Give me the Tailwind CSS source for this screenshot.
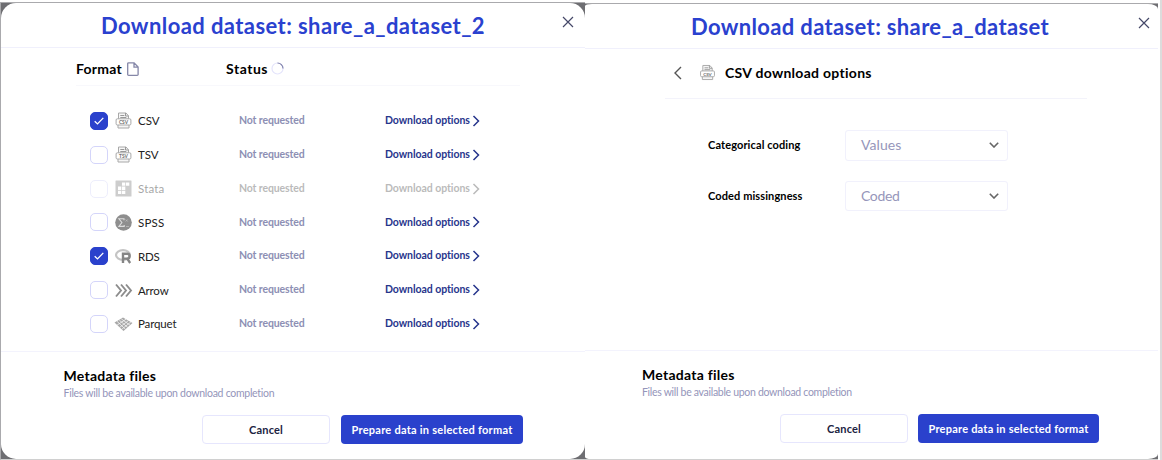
<!DOCTYPE html>
<html lang="en"><head><meta charset="utf-8"><title>Download dataset</title>
<script src="https://cdn.jsdelivr.net/npm/@tailwindcss/browser@4"></script></head>
<body class="bg-white font-['Lato',sans-serif] text-black">
<main class="flex h-[460px] w-[1162px] overflow-hidden">
<section class="mt-[2px] h-[458px] w-[585px] border-t border-l border-[#aaaaad] bg-[#6e6e72] border-b border-b-[#d0d0d0]">
<div class="flex h-[456px] flex-col rounded-[15px] bg-white">
<header class="flex h-[45px] border-b border-[#f0f0fc] pl-[100px]">
<h1 class="h-[45px] w-[457px] text-[22px] leading-[45px] font-bold whitespace-nowrap text-[#2a41cf]"><span data-w="384">Download dataset: share_a_dataset_2</span></h1>
<svg class="mt-[13px] ml-[4px] h-[12px] w-[12px]" viewBox="0 0 12 12" stroke="#454868" stroke-width="1.2"><path d="M1 1l10 10M11 1L1 11"/></svg>
</header>
<div class="ml-[75px] flex h-[38px] w-[444px] items-center border-b border-[#f8f8fc] pt-[4px] text-[14px] font-bold whitespace-nowrap">
<div class="flex w-[150px] items-center gap-[5px]"><span data-w="46">Format</span><svg class="h-[14px] w-[12px]" viewBox="0 0 12 14" fill="none" stroke="#8587a8" stroke-width="1.3"><path d="M1.6.8h5.5l4 4.2v7.400a.9.9 0 0 1-.9.900H1.600a.9.9 0 0 1-.9-.9V1.700a.9.9 0 0 1 .9-.9zM7 .8v4.300h4"/></svg></div>
<div class="flex items-center gap-[3px]"><span data-w="42">Status</span><svg class="h-[13px] w-[13px]" viewBox="0 0 13 13" fill="none" stroke-width="1.2"><circle cx="6.5" cy="6.5" r="5.5" stroke="#e4e4fb"/><path d="M6.5 1A5.5 5.5 0 0 1 12 6.5" stroke="#8284ad"/></svg></div>
</div>
<div id="rows" class="mt-[18px] ml-[89px] grid h-[237px] w-[400px] grid-rows-7"></div>
<footer class="mt-auto flex h-[108px] flex-col border-t border-[#f3f3fd] pl-[62.5px] whitespace-nowrap">
<h2 class="mt-[14px] h-[20px] text-[14px] leading-[20px] font-bold"><span data-w="92.5">Metadata files</span></h2>
<p class="h-[15px] text-[10.5px] leading-[15px] text-[#9495ba]"><span data-w="211">Files will be available upon download completion</span></p>
<div class="mt-[14px] ml-[138.5px] flex gap-[11px] text-[11px] font-bold">
<button class="h-[29px] w-[128px] rounded-[4px] border border-[#e6e6fd] pt-[2px] text-[#202342]"><span data-w="34">Cancel</span></button>
<button class="h-[29px] w-[182px] rounded-[4px] bg-[#2a41cc] pt-[2px] text-white"><span data-w="161">Prepare data in selected format</span></button>
</div></footer>
</div></section>
<section class="mt-[3px] h-[457px] w-[573px] border-t border-[#aaaaad] bg-[#6e6e72] border-b border-b-[#d0d0d0]">
<div class="flex h-[455px] flex-col rounded-tl-[7px_2px] rounded-tr-[10px_5px] rounded-br-[10px_5px] rounded-bl-[6px_2px] bg-white">
<header class="flex h-[45px] border-b border-[#f0f0fc] pl-[106px]">
<h1 class="h-[45px] w-[443px] text-[22px] leading-[45px] font-bold whitespace-nowrap text-[#2a41cf]"><span data-w="358">Download dataset: share_a_dataset</span></h1>
<svg class="mt-[13px] ml-[4px] h-[12px] w-[12px]" viewBox="0 0 12 12" stroke="#454868" stroke-width="1.2"><path d="M1 1l10 10M11 1L1 11"/></svg>
</header>
<div class="ml-[80px] flex h-[50px] w-[422px] items-center border-b border-[#f3f3fb] pb-[2px] pl-[8px] text-[14px] font-bold whitespace-nowrap">
<svg class="h-[14px] w-[9px]" viewBox="0 0 9 14" fill="none" stroke="#555" stroke-width="1.4"><path d="M8 1L2 7l6 6"/></svg>
<svg id="titleIcon" class="mr-[10px] ml-[18px] h-[17px] w-[15px]" viewBox="0 0 16 17"></svg>
<span data-w="147">CSV download options</span>
</div>
<div class="mt-[31px] ml-[123px] flex flex-col gap-[20px] text-[11px] font-bold whitespace-nowrap">
<div class="flex h-[31px] items-center"><div class="w-[137px]"><span data-w="92.5">Categorical coding</span></div><div class="flex h-[31px] w-[163px] items-center justify-between rounded-[3px] border border-[#f1f1fc] pr-[8px] pl-[15px] text-[14px] font-normal text-[#9696ba]"><span class="pb-[2px]" data-w="40.5">Values</span><svg class="mb-[1px] h-[6px] w-[10px]" viewBox="0 0 10 6" fill="none" stroke="#666" stroke-width="1.6"><path d="M.8.8L5 5 9.200.8"/></svg></div></div>
<div class="flex h-[30px] items-center"><div class="w-[137px]"><span data-w="94.5">Coded missingness</span></div><div class="flex h-[30px] w-[163px] items-center justify-between rounded-[3px] border border-[#f1f1fc] pr-[8px] pl-[15px] text-[14px] font-normal text-[#9696ba]"><span class="pb-[2px]" data-w="38.5">Coded</span><svg class="mb-[1px] h-[6px] w-[10px]" viewBox="0 0 10 6" fill="none" stroke="#666" stroke-width="1.6"><path d="M.8.8L5 5 9.200.8"/></svg></div></div>
</div>
<footer class="mt-auto flex h-[109px] flex-col border-t border-[#f3f3fd] pl-[57px] whitespace-nowrap">
<h2 class="mt-[14px] h-[20px] text-[14px] leading-[20px] font-bold"><span data-w="92.5">Metadata files</span></h2>
<p class="h-[15px] text-[10.5px] leading-[15px] text-[#9495ba]"><span data-w="210">Files will be available upon download completion</span></p>
<div class="mt-[14px] ml-[138px] flex gap-[10px] text-[11px] font-bold">
<button class="h-[29px] w-[128px] rounded-[4px] border border-[#e6e6fd] pt-[1px] text-[#202342]"><span data-w="34">Cancel</span></button>
<button class="h-[29px] w-[181px] rounded-[4px] bg-[#2a41cc] pt-[1px] text-white"><span data-w="160">Prepare data in selected format</span></button>
</div></footer>
</div></section>
<div class="ml-[2px] w-[2px] bg-[#dcdcdc]"></div>
</main>
<script>
const sheet=label=>`<path d="M3 7.500V1h7.500L13 3.800v3.700M2.500 12.800V16h11v-3.200" fill="#f6f6f6" stroke="#a8a8a8"/><path d="M4.800 3.500h4M4.800 5.500h6M10 1v3h3" stroke="#999" fill="none"/><rect x=".6" y="6.800" width="14.800" height="6.200" rx="1.200" fill="#fff" stroke="#a8a8a8"/><text x="8" y="11.700" font-size="4.800" font-weight="900" text-anchor="middle" fill="#777">${label}</text>`;
const icons=[
sheet('CSV'),sheet('TSV'),
'<rect width="16" height="16" rx=".5" y=".5" fill="#858585"/><path d="M6.500 2.500h3.300v3.300H6.500zM10.500 2.500h3.300v3.300h-3.300zM2.500 6.600h3.300v3.300H2.500zM6.500 6.600h3.300v3.300H6.500zM2.500 10.700h3.300V14H2.500zM6.500 10.700h3.300V14H6.500z" fill="#fff"/>',
'<circle cx="8" cy="8.500" r="8.300" fill="#8e8e8e"/><path d="M8.500 6.200V4.800H3.400l3 3.700-3 3.900h5.300V11" fill="none" stroke="#ddd" stroke-width="1.100"/><path d="M10.200 5.500l2 2M12.200 5.500l-2 2M10.500 12.500h3" stroke="#bbb" stroke-width=".8"/>',
'<ellipse cx="7.500" cy="7" rx="7" ry="4.800" fill="none" stroke="#c4c4c4" stroke-width="2.200"/><path d="M7.500 15V5.800h4.200a2.400 2.400 0 0 1 0 4.800H7.500M11 10.600c1.500 0 2 2.500 3.700 4.400" fill="none" stroke="#858585" stroke-width="2.400"/>',
'<path d="M.5 2.500l5 6-5 6M5.500 2.500l5 6-5 6M10.500 2.500l5 6-5 6" fill="none" stroke="#8c8c8c" stroke-width="1.900"/>',
'<path d="M7.500 1.500L17 7l-9 8-9-8.500z" fill="#a8a8a8"/><path d="M1.500 5.300l8.500 8M3.800 4.100l8.500 7.400M5.800 2.900l9 6.500M10.500 3.200L1.500 9.200M13 4.500L4 11.500M15.500 5.800L6 13.500" stroke="#f6f6f6" stroke-width=".8"/>'];
document.getElementById('titleIcon').innerHTML=icons[0];
const data=[['CSV',21.5,1],['TSV',20.5],['Stata',26.5],['SPSS',26.5],['RDS',21.5,1],['Arrow',30.5],['Parquet',38.5]];
document.getElementById('rows').innerHTML=data.map(([n,w,on],i)=>`<div class="flex items-center whitespace-nowrap text-[11px] ${i==2?'opacity-40':''}">
<span class="flex h-[18px] w-[18px] items-center justify-center rounded-[5px] border ${on?'border-[#2a41cc] bg-[#2a41cc]':'border-[#d4d5fa] bg-white'}">${on?'<svg class="h-[8px] w-[10px]" viewBox="0 0 10 8" fill="none" stroke="#fff" stroke-width="1.300"><path d="M.7 4.200l2.800 2.700L9.300.9"/></svg>':''}</span>
<svg class="ml-[7px] h-[17px] w-[17px] overflow-visible" viewBox="0 0 16 17">${icons[i]}</svg>
<div class="ml-[6px] w-[101px] text-[11.5px] text-[#222]"><span data-w="${w}">${n}</span></div>
<div class="w-[146px] text-[10.5px] font-bold ${i==2?'text-[#555]':'text-[#8d8fb4]'}"><span data-w="65.5">Not requested</span></div>
<div class="flex items-center gap-[2px] text-[10.5px] font-bold ${i==2?'text-[#555]':'text-[#27358c]'}"><span data-w="85">Download options</span><svg class="h-[12px] w-[8px]" viewBox="0 0 8 12" fill="none" stroke="currentColor" stroke-width="1.500"><path d="M1.500 1l5 5-5 5"/></svg></div></div>`).join('');
// Track each label so that it fills its design width.
const fitLabels=()=>document.querySelectorAll('[data-w]').forEach(s=>{
s.style.letterSpacing='0px';
s.style.letterSpacing=(s.dataset.w-s.getBoundingClientRect().width)/s.textContent.length+'px';});
addEventListener('load',()=>{fitLabels();document.fonts.ready.then(fitLabels);requestAnimationFrame(()=>requestAnimationFrame(fitLabels));});
</script>
</body></html>
